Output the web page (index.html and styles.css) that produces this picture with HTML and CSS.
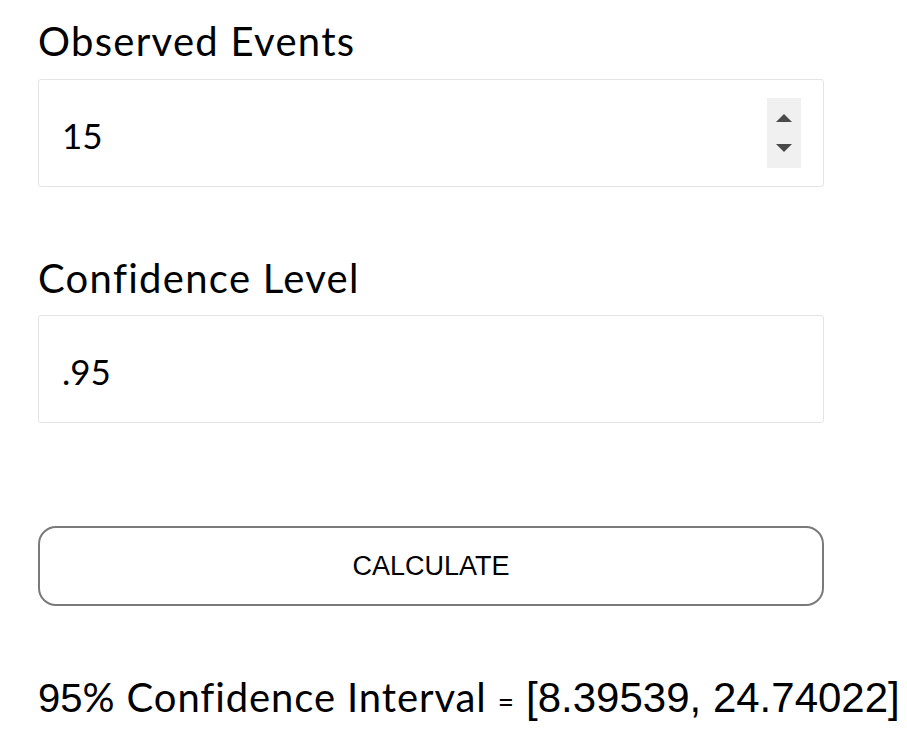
FILE: index.html
```html
<!DOCTYPE html>
<html lang="en">
<head>
  <meta charset="UTF-8">
  <title>Poisson Confidence Interval</title>
  <link rel="stylesheet" href="styles.css">
</head>
<body>

  <div class="calc">
    <div class="field">
      <label for="events">Observed Events</label>
      <div class="box">
        <input id="events" type="text" value="15">
        <div class="spin">
          <span class="up"></span>
          <span class="down"></span>
        </div>
      </div>
    </div>

    <div class="field">
      <label for="level">Confidence Level</label>
      <div class="box">
        <input id="level" type="text" value=".95">
      </div>
    </div>

    <button class="calc-btn">CALCULATE</button>

    <p class="result"><span class="num">95</span>% Confidence Interval <span class="eq">=</span> <span class="num big">[8.39539, 24.74022]</span></p>
  </div>

</body>
</html>
```

FILE: styles.css
```css
body {
  margin: 0;
  background: #fff;
  color: #000;
  font-family: Lato, "Noto Sans", sans-serif;
}
.calc {
  width: 786px;
  padding: 17px 0 0 38px;
  display: flex;
  flex-direction: column;
}
.field {
  display: flex;
  flex-direction: column;
  margin-bottom: 67px;
}
.field + .field {
  margin-bottom: 103px;
}
label {
  font-size: 40px;
  line-height: 48px;
  letter-spacing: 1.3px;
  margin-bottom: 14px;
}
.field + .field label {
  margin-bottom: 13px;
}
.box {
  height: 106px;
  border: 1px solid #e4e4e4;
  border-radius: 3px;
  display: flex;
  align-items: center;
  padding: 0 22px 0 23px;
}
.box input {
  flex: 1;
  border: none;
  outline: none;
  background: transparent;
  font-family: Lato, "Noto Sans", sans-serif;
  font-size: 35px;
  padding: 3px 0 0;
  color: #000;
}
.spin {
  width: 34px;
  height: 70px;
  background: #f0f0f0;
  display: flex;
  flex-direction: column;
  justify-content: space-around;
  align-items: center;
  padding: 5px 0;
  box-sizing: border-box;
}
.up, .down {
  width: 0;
  height: 0;
  border-left: 8px solid transparent;
  border-right: 8px solid transparent;
}
.up { border-bottom: 8px solid #4a4a4a; }
.down { border-top: 8px solid #4a4a4a; }
.calc-btn {
  height: 80px;
  background: #fff;
  border: 2px solid #7a7a7a;
  border-radius: 18px;
  font-family: "Liberation Sans Narrow", "Liberation Sans", sans-serif;
  font-size: 27px;
  color: #000;
}
.result {
  margin: 67px 0 0;
  font-size: 40px;
  line-height: 48px;
  letter-spacing: 0.9px;
  white-space: nowrap;
}
.eq {
  font-size: 28px;
}
.num {
  font-family: "Liberation Sans", Arial, sans-serif;
  font-size: 40px;
  letter-spacing: 0;
}
.num.big {
  font-size: 42px;
}
```
